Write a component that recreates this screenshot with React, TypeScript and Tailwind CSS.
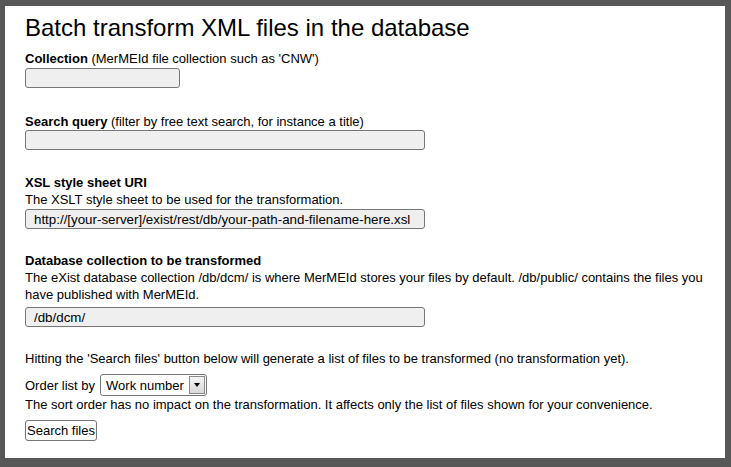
import React from "react";

const inputClass =
  "block h-[20px] rounded-[3px] border border-[#767676] bg-[#efefef] px-[8px] text-[13.333px] leading-[18px] text-black outline-none";

export default function App() {
  return (
    <div className="min-h-screen bg-[#575757] pb-[9px] pl-[5px] pr-[6px] pt-[6px] font-['Liberation_Sans',Arial,sans-serif] text-[13px] leading-[17px] text-black">
      <div className="h-[452px] bg-white pl-[20px] pr-[10px] pt-[8px]">
        <h1 className="mb-[8px] text-[24px] leading-[28px] font-normal">
          Batch transform XML files in the database
        </h1>

        <div>
          <p>
            <b>Collection</b> (MerMEId file collection such as 'CNW')
          </p>
          <input className={`${inputClass} mt-[1px] w-[155px]`} defaultValue="" />
        </div>

        <div className="mt-[25px]">
          <p>
            <b>Search query</b> (filter by free text search, for instance a title)
          </p>
          <input className={`${inputClass} w-[400px]`} defaultValue="" />
        </div>

        <div className="mt-[24px]">
          <p className="font-bold">XSL style sheet URI</p>
          <p>The XSLT style sheet to be used for the transformation.</p>
          <input
            className={`${inputClass} mt-[1px] w-[400px]`}
            defaultValue="http://[your-server]/exist/rest/db/your-path-and-filename-here.xsl"
          />
        </div>

        <div className="mt-[23px]">
          <p className="font-bold">Database collection to be transformed</p>
          <p className="w-[690px]">
            The eXist database collection /db/dcm/ is where MerMEId stores your files by default.
            /db/public/ contains the files you have published with MerMEId.
          </p>
          <input className={`${inputClass} mt-[4px] w-[400px]`} defaultValue="/db/dcm/" />
        </div>

        <p className="mt-[23px]">
          Hitting the 'Search files' button below will generate a list of files to be transformed
          (no transformation yet).
        </p>

        <div className="mt-[7px] flex h-[22px] items-center gap-[5px]">
          <span>Order list by</span>
          <div className="flex h-[22px] w-[107px] items-center justify-between rounded-[3px] border border-[#767676] bg-white pl-[5px] pr-[1px]">
            <span>Work number</span>
            <span className="flex h-[18px] w-[16px] items-center justify-center border border-[#8a8a8a] bg-gradient-to-b from-[#f4f4f4] to-[#d9d9d9]">
              <span className="h-0 w-0 border-l-[3.5px] border-r-[3.5px] border-t-[4px] border-l-transparent border-r-transparent border-t-black" />
            </span>
          </div>
        </div>

        <p>
          The sort order has no impact on the transformation. It affects only the list of files
          shown for your convenience.
        </p>

        <button
          type="button"
          className="mt-[7px] h-[21px] rounded-[3px] border border-[#767676] bg-white px-[1px] text-[13px] leading-[17px] text-black"
        >
          Search files
        </button>
      </div>
    </div>
  );
}
